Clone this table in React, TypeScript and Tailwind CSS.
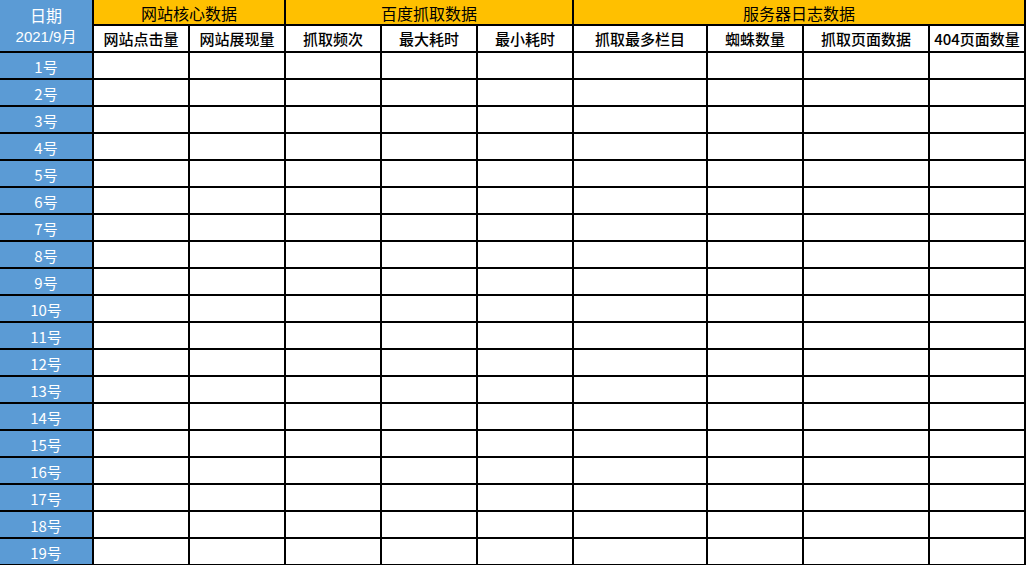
const cjk = "font-['Noto_Sans_CJK_SC','Noto_Sans',sans-serif]";

const subHeaders = [
  "网站点击量",
  "网站展现量",
  "抓取频次",
  "最大耗时",
  "最小耗时",
  "抓取最多栏目",
  "蜘蛛数量",
  "抓取页面数据",
  "404页面数量",
];

const days = Array.from({ length: 19 }, (_, i) => i + 1);

export default function App() {
  return (
    <div className={`h-[565px] w-[1026px] overflow-hidden bg-white ${cjk}`}>
      <div className="grid grid-cols-[92px_94px_94px_94px_94px_94px_132px_94px_124px_94px] grid-rows-[24px_25px_repeat(19,25px)] gap-[2px] bg-black pr-[2px] pb-[2px]">
        {/* date header spans both header rows */}
        <div className="row-span-2 flex flex-col items-center bg-[#5b9bd5] pt-[7px] font-['Liberation_Sans','Noto_Sans_CJK_SC',sans-serif] text-white">
          <span className="text-[16px] leading-[20px]">日期</span>
          <span className="mt-[1px] text-[15px] leading-[18px]">2021/9月</span>
        </div>

        <div className="col-span-2 flex items-center justify-center bg-[#ffc000] pt-[2px] text-[16px] text-black">
          网站核心数据
        </div>
        <div className="col-span-3 flex items-center justify-center bg-[#ffc000] pt-[2px] text-[16px] text-black">
          百度抓取数据
        </div>
        <div className="col-span-4 flex items-center justify-center bg-[#ffc000] pt-[2px] text-[16px] text-black">
          服务器日志数据
        </div>

        {subHeaders.map((h) => (
          <div
            key={h}
            className="flex items-center justify-center whitespace-nowrap bg-white pt-[2px] text-[15px] font-medium text-black"
          >
            {h}
          </div>
        ))}

        {days.map((d) => (
          <Row key={d} day={d} />
        ))}
      </div>
    </div>
  );
}

function Row({ day }: { day: number }) {
  return (
    <>
      <div className="flex items-center justify-center bg-[#5b9bd5] pt-[3px] text-[15px] text-white">
        {day}号
      </div>
      {subHeaders.map((h) => (
        <div key={h} className="bg-white" />
      ))}
    </>
  );
}
